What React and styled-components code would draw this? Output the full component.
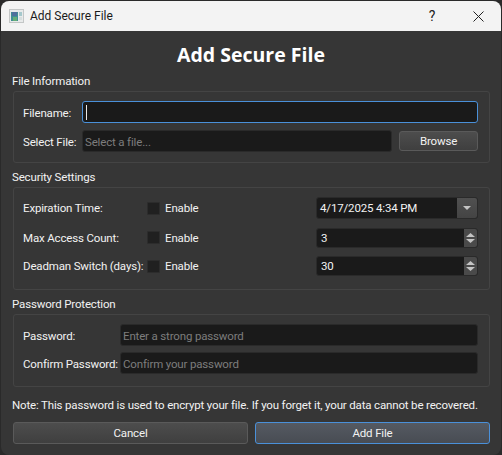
import React from 'react';
import styled, { createGlobalStyle } from 'styled-components';

const GlobalStyle = createGlobalStyle`
  html, body {
    margin: 0;
    padding: 0;
    background: #2a2a2a;
  }
  * {
    box-sizing: border-box;
  }
`;

const Window = styled.div`
  width: 502px;
  height: 455px;
  padding: 1px 1px 0 1px;
  font-family: Roboto, "Open Sans", sans-serif;
  font-size: 11.5px;
  letter-spacing: -0.16px;
  line-height: 16px;
  color: #f2f2f2;
  overflow: hidden;
`;

const TitleBar = styled.div`
  height: 30px;
  background: #f3f3f3;
  border-radius: 8px 8px 0 0;
  display: flex;
  align-items: center;
  padding-left: 8px;
  color: #1a1a1a;
`;

const TitleText = styled.span`
  margin-left: 6px;
  font-size: 12px;
  letter-spacing: 0;
`;

const TitleButton = styled.span`
  width: 46px;
  height: 30px;
  display: flex;
  align-items: center;
  justify-content: center;
  font-size: ${(p) => p.$size || 12}px;
  color: #222;
`;

const TitleActions = styled.div`
  margin-left: auto;
  display: flex;
`;

const Body = styled.div`
  height: 424px;
  background: #363636;
  border-radius: 0 0 8px 8px;
  padding: 0 11px;
  display: flex;
  flex-direction: column;
`;

const Heading = styled.h1`
  margin: 0;
  height: 42px;
  padding-top: 10px;
  font-family: "Open Sans", sans-serif;
  font-size: 19.5px;
  letter-spacing: 0;
  line-height: 27px;
  font-weight: 700;
  text-align: center;
  color: #fff;
`;

const SectionLabel = styled.div`
  height: 16px;
  margin-top: ${(p) => p.$top || 0}px;
  margin-bottom: 2px;
`;

const Group = styled.div`
  height: ${(p) => p.$height}px;
  margin-left: 1px;
  border: 1px solid #444;
  border-radius: 3px;
  padding: 9px 11px 0 9px;
  display: flex;
  flex-direction: column;
  gap: ${(p) => p.$gap || 7}px;
`;

const FieldLabel = styled.span`
  white-space: nowrap;
`;

const FormRow = styled.div`
  display: grid;
  grid-template-columns: ${(p) => p.$label}px 1fr;
  align-items: center;
  height: 22px;

  ${FieldLabel} {
    margin-top: 2px;
  }
`;

const Field = styled.div`
  flex: ${(p) => (p.$grow ? 1 : 'none')};
  height: 22px;
  background: #1a1a1a;
  border: 1px solid ${(p) => (p.$focused ? '#4a90d9' : '#2a2a2a')};
  border-radius: 3px;
  display: flex;
  align-items: center;
  padding-left: 2px;
  min-width: 0;
  overflow: hidden;
`;

const Caret = styled.span`
  width: 1px;
  height: 15px;
  background: #e8e8e8;
  margin-left: 1px;
`;

const TextInput = styled.input`
  flex: 1;
  min-width: 0;
  height: 100%;
  border: 0;
  outline: 0;
  padding: 2px 0 0;
  background: transparent;
  font: inherit;
  letter-spacing: inherit;
  color: #f2f2f2;
  &::placeholder {
    color: #7d7d7d;
    opacity: 1;
  }
`;

const FileRow = styled.div`
  display: flex;
  align-items: center;
  gap: 7px;
  min-width: 0;
`;

const Button = styled.button`
  height: ${(p) => p.$height || 22}px;
  width: ${(p) => (p.$width ? `${p.$width}px` : 'auto')};
  flex: ${(p) => (p.$width ? 'none' : 1)};
  margin: 0;
  padding: 0;
  border: 1px solid ${(p) => (p.$primary ? '#4a90d9' : '#5a5a5a')};
  border-radius: 3px;
  background: ${(p) =>
    p.$primary
      ? 'linear-gradient(#555a62, #484c53)'
      : 'linear-gradient(#4d4d4d, #3f3f3f)'};
  font: inherit;
  letter-spacing: inherit;
  color: #f2f2f2;
`;

const SettingRow = styled.div`
  display: grid;
  grid-template-columns: 124px 13px 1fr 162px;
  align-items: center;
  height: ${(p) => p.$height || 20}px;
`;

const Checkbox = styled.span`
  width: 13px;
  height: 13px;
  background: #202020;
  border: 1px solid #2c2c2c;
  border-radius: 1px;
`;

const CheckLabel = styled.span`
  margin-left: 5px;
`;

const Combo = styled.div`
  display: flex;
  height: ${(p) => p.$height}px;
  border: 1px solid #2a2a2a;
  border-radius: 3px;
  overflow: hidden;
  background: #1a1a1a;
`;

const ComboValue = styled.span`
  flex: 1;
  line-height: ${(p) => p.$height - 2}px;
  padding-left: ${(p) => p.$pad}px;
`;

const DropButton = styled.span`
  width: 20px;
  background: linear-gradient(#505050, #444);
  display: flex;
  align-items: center;
  justify-content: center;
`;

const SpinButtons = styled.span`
  width: 13px;
  background: #4a4a4a;
  display: flex;
  flex-direction: column;
  align-items: center;
  justify-content: center;
  gap: 2px;
`;

const Note = styled.div`
  height: 16px;
  margin-top: 10px;
  white-space: nowrap;
`;

const Actions = styled.div`
  display: flex;
  gap: 7px;
  margin-top: 9px;
  margin-left: 1px;
`;

function AppIcon() {
  return (
    <svg width="15" height="14" viewBox="0 0 15 14">
      <rect x="0.5" y="0.5" width="14" height="13" fill="#e8eaea" stroke="#c4c7c7" />
      <rect x="2" y="3" width="7" height="9" fill="#3f8f94" />
      <rect x="3" y="3" width="5" height="4" fill="#4f6f9c" />
      <rect x="4" y="8" width="4" height="4" fill="#66ad78" />
      <rect x="10" y="3" width="3" height="4" fill="#a5c8cc" />
      <rect x="10" y="8" width="3" height="3" fill="#d6dede" />
    </svg>
  );
}

function CloseIcon() {
  return (
    <svg width="11" height="11" viewBox="0 0 11 11">
      <path d="M0.5 0.5 L10.5 10.5 M10.5 0.5 L0.5 10.5" stroke="#222" strokeWidth="1" fill="none" />
    </svg>
  );
}

function Arrow({ up, width = 9, height = 4, color = '#c4c4c4' }) {
  const d = up
    ? `M0 ${height} L${width / 2} 0 L${width} ${height} Z`
    : `M0 0 L${width} 0 L${width / 2} ${height} Z`;
  return (
    <svg width={width} height={height} viewBox={`0 0 ${width} ${height}`}>
      <path d={d} fill={color} />
    </svg>
  );
}

function Spin({ value }) {
  return (
    <Combo $height={20}>
      <ComboValue $height={20} $pad={4}>{value}</ComboValue>
      <SpinButtons>
        <Arrow up />
        <Arrow />
      </SpinButtons>
    </Combo>
  );
}

function Enable() {
  return (
    <>
      <Checkbox />
      <CheckLabel>Enable</CheckLabel>
    </>
  );
}

export default function App() {
  return (
    <Window>
      <GlobalStyle />
      <TitleBar>
        <AppIcon />
        <TitleText>Add Secure File</TitleText>
        <TitleActions>
          <TitleButton $size={14}>?</TitleButton>
          <TitleButton><CloseIcon /></TitleButton>
        </TitleActions>
      </TitleBar>
      <Body>
        <Heading>Add Secure File</Heading>

        <SectionLabel>File Information</SectionLabel>
        <Group $height={72}>
          <FormRow $label={59}>
            <FieldLabel>Filename:</FieldLabel>
            <Field $focused>
              <Caret />
              <TextInput readOnly />
            </Field>
          </FormRow>
          <FormRow $label={59}>
            <FieldLabel>Select File:</FieldLabel>
            <FileRow>
              <Field $grow>
                <TextInput readOnly placeholder="Select a file..." />
              </Field>
              <Button $width={79} $height={20}>Browse</Button>
            </FileRow>
          </FormRow>
        </Group>

        <SectionLabel $top={6}>Security Settings</SectionLabel>
        <Group $height={103} $gap={8}>
          <SettingRow $height={22}>
            <FieldLabel>Expiration Time:</FieldLabel>
            <Enable />
            <Combo $height={22}>
              <ComboValue $height={22} $pad={3}>4/17/2025 4:34 PM</ComboValue>
              <DropButton><Arrow width={8} /></DropButton>
            </Combo>
          </SettingRow>
          <SettingRow $height={21}>
            <FieldLabel>Max Access Count:</FieldLabel>
            <Enable />
            <Spin value="3" />
          </SettingRow>
          <SettingRow>
            <FieldLabel>Deadman Switch (days):</FieldLabel>
            <Enable />
            <Spin value="30" />
          </SettingRow>
        </Group>

        <SectionLabel $top={6}>Password Protection</SectionLabel>
        <Group $height={73} $gap={6}>
          <FormRow $label={97}>
            <FieldLabel>Password:</FieldLabel>
            <Field>
              <TextInput readOnly placeholder="Enter a strong password" />
            </Field>
          </FormRow>
          <FormRow $label={97}>
            <FieldLabel>Confirm Password:</FieldLabel>
            <Field>
              <TextInput readOnly placeholder="Confirm your password" />
            </Field>
          </FormRow>
        </Group>

        <Note>Note: This password is used to encrypt your file. If you forget it, your data cannot be recovered.</Note>
        <Actions>
          <Button>Cancel</Button>
          <Button $primary>Add File</Button>
        </Actions>
      </Body>
    </Window>
  );
}
